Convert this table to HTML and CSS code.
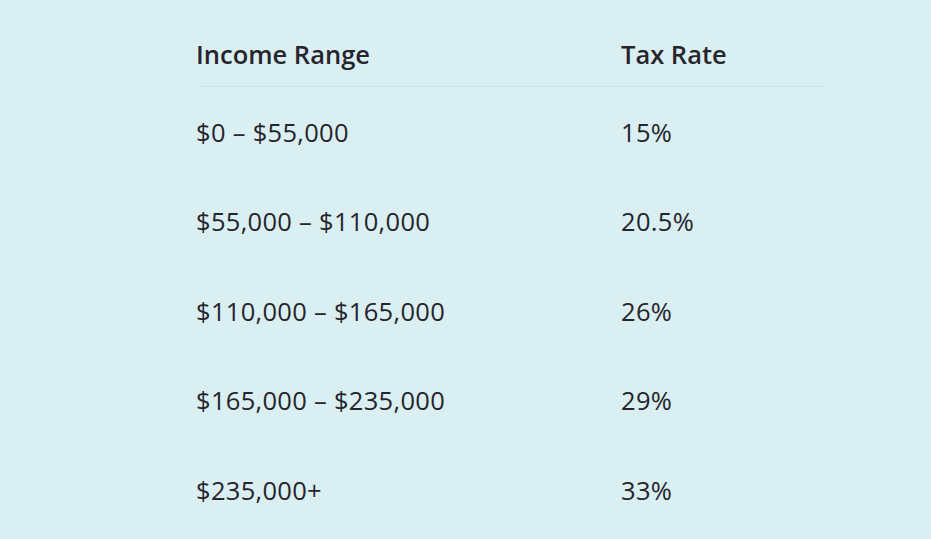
FILE: index.html
```html
<!DOCTYPE html>
<html lang="en">
<head>
<meta charset="utf-8">
<title>Tax Brackets</title>
<link rel="stylesheet" href="styles.css">
</head>
<body>
<main class="page">
  <div class="tax-table">
    <div class="cell head">Income Range</div>
    <div class="cell head">Tax Rate</div>
    <div class="cell">$0 – $55,000</div>
    <div class="cell">15%</div>
    <div class="cell">$55,000 – $110,000</div>
    <div class="cell">20.5%</div>
    <div class="cell">$110,000 – $165,000</div>
    <div class="cell">26%</div>
    <div class="cell">$165,000 – $235,000</div>
    <div class="cell">29%</div>
    <div class="cell">$235,000+</div>
    <div class="cell">33%</div>
  </div>
</main>
</body>
</html>
```

FILE: styles.css
```css
html, body {
  margin: 0;
  padding: 0;
}
body {
  background: #daeff1;
  color: #26242c;
  font-family: "Open Sans", "Noto Sans", "Liberation Sans", sans-serif;
  font-size: 25.5px;
  height: 539px;
  overflow: hidden;
}
.page {
  padding-left: 196px;
  padding-top: 22px;
}
.tax-table {
  display: grid;
  grid-template-columns: 425px 204px;
  grid-auto-rows: 89.5px;
  grid-template-rows: 65px;
}
.cell {
  display: flex;
  align-items: center;
  letter-spacing: 0.3px;
}
.head {
  font-weight: 600;
  letter-spacing: 0;
  align-items: flex-start;
  padding-top: 15px;
  border-bottom: 1px solid #d0e6e8;
  box-sizing: border-box;
}
```
